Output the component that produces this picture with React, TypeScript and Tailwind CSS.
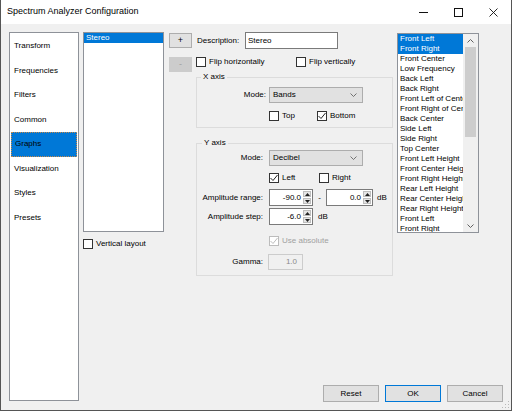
import React from "react";

const channels = [
  "Front Left",
  "Front Right",
  "Front Center",
  "Low Frequency",
  "Back Left",
  "Back Right",
  "Front Left of Center",
  "Front Right of Center",
  "Back Center",
  "Side Left",
  "Side Right",
  "Top Center",
  "Front Left Height",
  "Front Center Height",
  "Front Right Height",
  "Rear Left Height",
  "Rear Center Height",
  "Rear Right Height",
  "Front Left",
  "Front Right",
];

const pages = ["Transform", "Frequencies", "Filters", "Common", "Graphs", "Visualization", "Styles", "Presets"];

function Check({ checked, disabled, label, className = "" }: { checked?: boolean; disabled?: boolean; label: string; className?: string }) {
  return (
    <div className={"flex h-[10px] items-center gap-[3px] leading-[10px] " + className}>
      <span
        className={
          "flex h-[10px] w-[10px] shrink-0 items-center justify-center border bg-white " +
          (disabled ? "border-[#bcbcbc]" : "border-[#333]")
        }
      >
        {checked && (
          <svg width="8" height="8" viewBox="0 0 8 8">
            <polyline points="0.5,4 3,6.5 7.5,1" fill="none" stroke={disabled ? "#bcbcbc" : "#222"} strokeWidth="1" />
          </svg>
        )}
      </span>
      <span className={disabled ? "text-[#a0a0a0]" : ""}>{label}</span>
    </div>
  );
}

function Combo({ value }: { value: string }) {
  return (
    <div className="flex h-[16px] w-[94px] items-center border border-[#adadad] bg-[#e1e1e1] pl-[3px] pr-[5px]">
      <span className="flex-1">{value}</span>
      <svg width="7" height="4" viewBox="0 0 7 4">
        <polyline points="0.5,0.5 3.5,3.5 6.5,0.5" fill="none" stroke="#555" strokeWidth="0.8" />
      </svg>
    </div>
  );
}

function Spin({ value, w }: { value: string; w: string }) {
  return (
    <div className={"flex h-[17px] items-stretch border border-[#7a7a7a] bg-white " + w}>
      <span className="flex-1 pr-[2px] text-right leading-[15px]">{value}</span>
      <div className="flex w-[9px] flex-col gap-[1px] py-[1px] pr-[1px]">
        <div className="flex flex-1 items-center justify-center border border-[#bdbdbd] bg-[#e5e5e5]">
          <svg width="5" height="3" viewBox="0 0 5 3">
            <polygon points="0,3 2.5,0 5,3" fill="#222" />
          </svg>
        </div>
        <div className="flex flex-1 items-center justify-center border border-[#bdbdbd] bg-[#e5e5e5]">
          <svg width="5" height="3" viewBox="0 0 5 3">
            <polygon points="0,0 2.5,3 5,0" fill="#222" />
          </svg>
        </div>
      </div>
    </div>
  );
}

export default function App() {
  return (
    <div className="flex h-[411px] w-[512px] flex-col overflow-hidden border-x border-b border-[#555] font-['Liberation_Sans',Arial,sans-serif] text-[8px] text-black">
      {/* Title bar */}
      <div className="flex h-[24px] shrink-0 items-center bg-white pl-[6px]">
        <span className="text-[9px]">Spectrum Analyzer Configuration</span>
        <div className="ml-auto flex h-full">
          <div className="flex w-[35px] items-center justify-center">
            <svg width="9" height="9" viewBox="0 0 9 9">
              <line x1="0" y1="4.5" x2="9" y2="4.5" stroke="#111" strokeWidth="1" />
            </svg>
          </div>
          <div className="flex w-[35px] items-center justify-center">
            <svg width="9" height="9" viewBox="0 0 9 9">
              <rect x="0.5" y="0.5" width="8" height="8" fill="none" stroke="#111" strokeWidth="1" />
            </svg>
          </div>
          <div className="flex w-[35px] items-center justify-center">
            <svg width="9" height="9" viewBox="0 0 9 9">
              <path d="M0.5 0.5 L8.5 8.5 M8.5 0.5 L0.5 8.5" stroke="#111" strokeWidth="0.9" />
            </svg>
          </div>
        </div>
      </div>

      {/* Body */}
      <div className="relative flex flex-1 bg-[#f0f0f0]">
        {/* Page list */}
        <div className="pl-[8px] pt-[8px]">
          <div className="h-[369px] w-[70px] border border-[#8e9299] bg-white pt-[1px]">
            {pages.map((p) => (
              <div
                key={p}
                className={
                  "mx-[1px] flex h-[24.5px] items-center pl-[3px] " +
                  (p === "Graphs" ? "border border-dotted border-[#c7894a] bg-[#0078d7]" : "")
                }
              >
                {p}
              </div>
            ))}
          </div>
        </div>

        <div className="flex flex-1 flex-col">
          <div className="flex pl-[4px] pt-[8px]">
            {/* Graph list */}
            <div className="w-[81px]">
              <div className="h-[200px] border border-[#8e9299] bg-white">
                <div className="h-[10px] bg-[#0078d7] pl-[2px] leading-[10px] text-white">Stereo</div>
              </div>
              <Check label="Vertical layout" className="mt-[7px]" />
            </div>

            {/* Add / remove */}
            <div className="ml-[5px] w-[23px]">
              <div className="mt-[1px] flex h-[15px] items-center justify-center border border-[#adadad] bg-[#e1e1e1] text-[9px]">+</div>
              <div className="mt-[9px] flex h-[15px] items-center justify-center bg-[#cccccc] text-[9px] text-[#a0a0a0]">-</div>
            </div>

            {/* Settings */}
            <div className="ml-[4px] w-[197px]">
              <div className="flex h-[17px] items-center">
                <span className="w-[49px] pl-[1px]">Description:</span>
                <div className="flex h-[17px] w-[93px] items-center border border-[#7a7a7a] bg-white pl-[2px]">Stereo</div>
              </div>
              <div className="mt-[8px] flex">
                <Check label="Flip horizontally" className="w-[100px]" />
                <Check label="Flip vertically" />
              </div>

              <fieldset className="mt-[5px] border border-[#dcdcdc] pb-[6px]">
                <legend className="ml-[4px] px-[2px] leading-[10px]">X axis</legend>
                <div className="mt-[5px] flex items-center">
                  <span className="w-[69px] text-right">Mode:</span>
                  <div className="ml-[3px]">
                    <Combo value="Bands" />
                  </div>
                </div>
                <div className="mt-[8px] flex pl-[72px]">
                  <Check label="Top" className="w-[48px]" />
                  <Check label="Bottom" checked />
                </div>
              </fieldset>

              <fieldset className="mt-[10px] border border-[#dcdcdc] pb-[5px]">
                <legend className="ml-[5px] px-[2px] leading-[10px]">Y axis</legend>
                <div className="mt-[2px] flex items-center">
                  <span className="w-[66px] text-right">Mode:</span>
                  <div className="ml-[6px]">
                    <Combo value="Decibel" />
                  </div>
                </div>
                <div className="mt-[7px] flex pl-[72px]">
                  <Check label="Left" checked className="w-[50px]" />
                  <Check label="Right" />
                </div>
                <div className="mt-[6px] flex items-center">
                  <span className="w-[66px] text-right">Amplitude range:</span>
                  <div className="ml-[6px]">
                    <Spin value="-90.0" w="w-[44px]" />
                  </div>
                  <span className="w-[13px] text-center">-</span>
                  <Spin value="0.0" w="w-[47px]" />
                  <span className="ml-[4px]">dB</span>
                </div>
                <div className="mt-[2px] flex items-center">
                  <span className="w-[66px] text-right">Amplitude step:</span>
                  <div className="ml-[6px]">
                    <Spin value="-6.0" w="w-[44px]" />
                  </div>
                  <span className="ml-[5px]">dB</span>
                </div>
                <div className="mt-[11px] pl-[72px]">
                  <Check label="Use absolute" checked disabled />
                </div>
                <div className="mt-[8px] flex items-center">
                  <span className="w-[66px] text-right">Gamma:</span>
                  <div className="ml-[5px] flex h-[16px] w-[35px] items-center justify-end border border-[#cccccc] pr-[5px] text-[#8a8a8a]">
                    1.0
                  </div>
                </div>
              </fieldset>
            </div>

            {/* Channel list */}
            <div className="ml-[4px] mt-[1px] flex h-[200px] w-[82px] border border-[#8e9299] bg-white">
              <div className="w-[65px] overflow-hidden">
                {channels.map((c, i) => (
                  <div
                    key={i}
                    className={
                      "h-[10px] whitespace-nowrap pl-[2px] leading-[10px] " +
                      (i < 2 ? "bg-[#0078d7] text-white" : "")
                    }
                  >
                    {c}
                  </div>
                ))}
              </div>
              <div className="flex w-[15px] flex-col items-center bg-[#f0f0f0]">
                <div className="flex h-[13px] items-center justify-center">
                  <svg width="7" height="4" viewBox="0 0 7 4">
                    <polyline points="0.5,3.5 3.5,0.5 6.5,3.5" fill="none" stroke="#606060" strokeWidth="1" />
                  </svg>
                </div>
                <div className="h-[90px] w-[11px] bg-[#cdcdcd]" />
                <div className="mt-auto flex h-[13px] items-center justify-center">
                  <svg width="7" height="4" viewBox="0 0 7 4">
                    <polyline points="0.5,0.5 3.5,3.5 6.5,0.5" fill="none" stroke="#606060" strokeWidth="1" />
                  </svg>
                </div>
              </div>
            </div>
          </div>

          {/* Dialog buttons */}
          <div className="mt-auto flex justify-end gap-[6px] pb-[8px] pr-[8px]">
            <div className="flex h-[17px] w-[56px] items-center justify-center border border-[#adadad] bg-[#e1e1e1]">Reset</div>
            <div className="flex h-[17px] w-[56px] items-center justify-center border border-[#0078d7] bg-[#e1e1e1]">OK</div>
            <div className="flex h-[17px] w-[56px] items-center justify-center border border-[#adadad] bg-[#e1e1e1]">Cancel</div>
          </div>
        </div>

        {/* Size grip */}
        <svg className="absolute bottom-[1px] right-[1px]" width="8" height="8" viewBox="0 0 8 8">
          <rect x="6" y="0" width="1" height="1" fill="#b8b8b8" />
          <rect x="3" y="3" width="1" height="1" fill="#b8b8b8" />
          <rect x="6" y="3" width="1" height="1" fill="#b8b8b8" />
          <rect x="0" y="6" width="1" height="1" fill="#b8b8b8" />
          <rect x="3" y="6" width="1" height="1" fill="#b8b8b8" />
          <rect x="6" y="6" width="1" height="1" fill="#b8b8b8" />
        </svg>
      </div>
    </div>
  );
}
